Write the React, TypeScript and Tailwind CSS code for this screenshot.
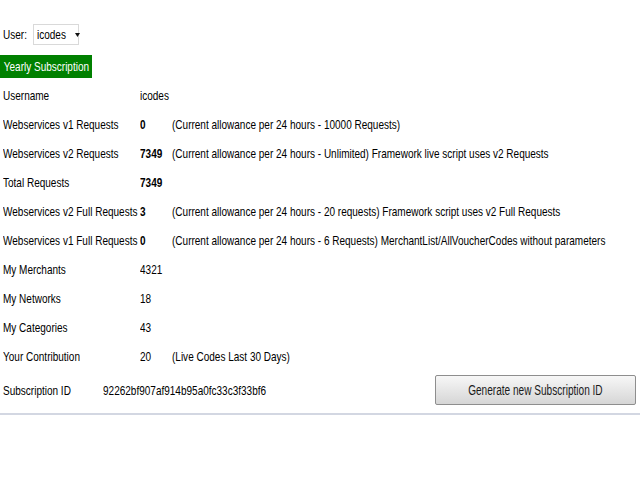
import React from 'react';

interface Row {
  label: string;
  value: string;
  bold?: boolean;
  note?: string;
}

const rows: Row[] = [
  { label: 'Username', value: 'icodes' },
  { label: 'Webservices v1 Requests', value: '0', bold: true, note: '(Current allowance per 24 hours - 10000 Requests)' },
  { label: 'Webservices v2 Requests', value: '7349', bold: true, note: '(Current allowance per 24 hours - Unlimited) Framework live script uses v2 Requests' },
  { label: 'Total Requests', value: '7349', bold: true },
  { label: 'Webservices v2 Full Requests', value: '3', bold: true, note: '(Current allowance per 24 hours - 20 requests) Framework script uses v2 Full Requests' },
  { label: 'Webservices v1 Full Requests', value: '0', bold: true, note: '(Current allowance per 24 hours - 6 Requests) MerchantList/AllVoucherCodes without parameters' },
  { label: 'My Merchants', value: '4321' },
  { label: 'My Networks', value: '18' },
  { label: 'My Categories', value: '43' },
  { label: 'Your Contribution', value: '20', note: '(Live Codes Last 30 Days)' },
];

// the page font is a narrow one; squeeze Liberation Sans to the same width
const T: React.FC<{ children: React.ReactNode; className?: string }> = ({ children, className = '' }) => (
  <span className={`inline-block whitespace-nowrap scale-x-[0.77] ${className}`}>{children}</span>
);

const App: React.FC = () => {
  return (
    <div
      className="w-[640px] h-[480px] bg-white text-[13px] leading-[15px] text-black overflow-hidden"
      style={{ fontFamily: '"Liberation Sans", Arial, sans-serif' }}
    >
      <div className="pt-[24px] flex items-center">
        <span className="pl-[3px] w-[33px]">
          <T className="origin-left">User:</T>
        </span>
        <div className="w-[46px] h-[21px] border border-[#d9d9d9] bg-white flex items-center justify-between pl-[3px] pr-[6px]">
          <T className="origin-left">icodes</T>
          <svg className="shrink-0" width="5" height="4" viewBox="0 0 5 4">
            <path d="M0 0h5L2.5 4z" fill="#111" />
          </svg>
        </div>
      </div>

      <div className="mt-[10px] w-[92px] h-[23px] bg-[#008000] text-white flex items-center justify-center">
        <T className="origin-center">Yearly Subscription</T>
      </div>

      <div className="mt-[3px]">
        {rows.map((r) => (
          <div key={r.label} className="h-[29px] flex items-center">
            <span className="pl-[3px] w-[140px] shrink-0">
              <T className="origin-left">{r.label}</T>
            </span>
            <span className={`w-[32px] shrink-0 ${r.bold ? 'font-bold' : ''}`}>
              <T className="origin-left">{r.value}</T>
            </span>
            {r.note && <T className="origin-left">{r.note}</T>}
          </div>
        ))}
      </div>

      <div className="h-[38px] flex items-center pr-[4px]">
        <span className="pl-[3px] w-[103px] shrink-0">
          <T className="origin-left">Subscription ID</T>
        </span>
        <T className="origin-left">92262bf907af914b95a0fc33c3f33bf6</T>
        <button className="ml-auto w-[201px] h-[30px] border border-[#8e8e8e] rounded-[2px] bg-gradient-to-b from-[#f7f7f7] to-[#d6d6d6] text-[14px] text-[#1a1a1a] flex items-center justify-center">
          <span className="inline-block whitespace-nowrap origin-center scale-x-[0.72]">Generate new Subscription ID</span>
        </button>
      </div>

      <div className="mt-[4px] h-[2px] bg-[#d3d7e2]" />
    </div>
  );
};

export default App;
